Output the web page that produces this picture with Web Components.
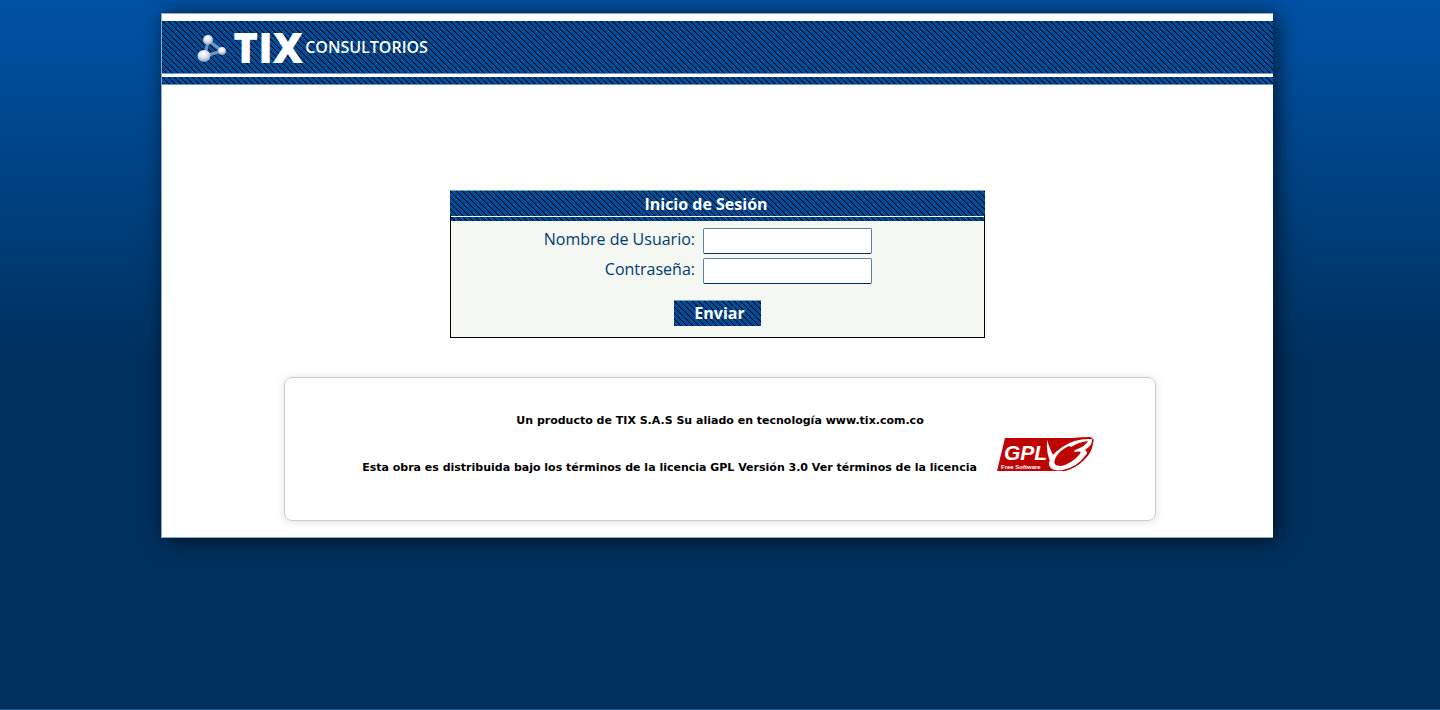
<!DOCTYPE html>
<html lang="es">
<head>
<meta charset="utf-8">
<title>TIX Consultorios</title>
<style>
html { min-height: 100%; background: #00305e; }
body {
  margin: 0; min-height: 100vh; box-sizing: border-box; border-bottom: 1px solid #1c57a5;
  background: #00305e linear-gradient(#0050a4 0, #004f9f 40px, #00305e 360px) no-repeat;
  font-family: "Open Sans", "Noto Sans", sans-serif;
  --stripes: url("data:image/svg+xml,%3Csvg xmlns='http://www.w3.org/2000/svg' width='6' height='6' shape-rendering='crispEdges'%3E%3Cpath fill='%23004e9e' d='M0 0h6v6H0z'/%3E%3Cpath fill='%23003c7a' d='M1 0h1v1H1zM2 1h1v1H2zM3 2h1v1H3zM4 3h1v1H4zM5 4h1v1H5zM0 5h1v1H0z'/%3E%3Cpath fill='%23000000' d='M0 0h1v1H0zM1 1h1v1H1zM2 2h1v1H2zM3 3h1v1H3zM4 4h1v1H4zM5 5h1v1H5z'/%3E%3C/svg%3E");
}
</style>
</head>
<body>
<tix-page>
  <tix-header slot="header"></tix-header>
  <tix-login></tix-login>
  <tix-footer></tix-footer>
</tix-page>
<script>
const define = (name, html) => {
  const template = document.createElement('template');
  template.innerHTML = html;
  customElements.define(name, class extends HTMLElement {
    constructor() {
      super();
      this.attachShadow({ mode: 'open' }).append(template.content.cloneNode(true));
    }
  });
};

define('tix-page', `
<style>
:host { display: block; padding: 13px 0 24px; }
.wrap { padding-right: 6px; }
.sheet {
  width: 77.5%; margin: 0 auto; box-sizing: border-box;
  background: #fff; border: 1px solid #8fa9c4; border-right: 0;
  box-shadow: 4px 2px 20px rgba(0,0,0,.65);
}
main { display: flex; flex-direction: column; align-items: center; gap: 39px; padding: 105px 0 16px; }
</style>
<div class="wrap"><div class="sheet">
  <slot name="header"></slot>
  <main><slot></slot></main>
</div></div>`);

define('tix-molecule', `
<style>:host { display: block; width: 30px; height: 30px; } svg { display: block; overflow: visible; }</style>
<svg width="30" height="30" viewBox="0 0 30 30" aria-hidden="true">
  <defs><radialGradient id="g" cx=".45" cy=".3" r=".7">
    <stop offset="0" stop-color="#fff"/><stop offset=".5" stop-color="#dce3ec"/><stop offset="1" stop-color="#8b9db8"/>
  </radialGradient></defs>
  <path d="M10 8 7 24 24 19Z" fill="none" stroke="#7395bf" stroke-width="3"/>
  <circle cx="10" cy="8" r="5" fill="url(#g)"/>
  <circle cx="24" cy="19" r="4" fill="url(#g)"/>
  <ellipse cx="6" cy="24" rx="6.500" ry="6" fill="url(#g)"/>
</svg>`);

define('tix-header', `
<style>
:host { display: block; padding-top: 7px; color: #fff; }
.bar { display: flex; align-items: center; height: 52px; padding-left: 36px; background: var(--stripes); border-bottom: 1px solid #7f9fc2; }
h1 { display: flex; align-items: center; gap: 2px; margin: 0; padding-left: 5px; font-weight: 400; line-height: 48px; }
.name { font-size: 42px; font-weight: 800; line-height: 48px; }
.sub { font-size: 16px; font-weight: 600; line-height: 48px; }
.rule { height: 7px; margin-top: 3px; background: var(--stripes); border-bottom: 1px solid #6f94bd; }
</style>
<div class="bar"><tix-molecule></tix-molecule><h1><span class="name">TIX</span><span class="sub">CONSULTORIOS</span></h1></div>
<div class="rule"></div>`);

define('tix-login', `
<style>
:host { display: block; width: 535px; max-width: 100%; }
form { margin: 0; box-sizing: border-box; border: 1px solid #000; border-top: 0; background: #f4f7f2; padding-bottom: 11px; }
h2 {
  margin: 0 -1px; height: 26px; box-sizing: border-box; padding-right: 23px; border-top: 1px solid #7e9dbf;
  background: var(--stripes); color: #fff; text-align: center; font-size: 16px; line-height: 26px; font-weight: 700;
}
.rule { height: 4px; background: var(--stripes); border-top: 1px solid #fff; }
.fields { display: grid; grid-template-columns: 244px 169px; column-gap: 8px; row-gap: 4px; padding-top: 7px; }
label { text-align: right; color: #003a74; font-size: 16px; line-height: 22px; }
input {
  box-sizing: border-box; width: 169px; height: 26px; padding: 2px 4px; background: #fff;
  border: 1px solid #5f7f9f; border-bottom-color: #00305e; border-radius: 2px; font: 14px "Open Sans", sans-serif;
}
button {
  display: block; margin: 16px auto 0; width: 87px; height: 26px; padding: 0 0 0 4px; border: 0; border-top: 1px solid #7e9dbf;
  background: var(--stripes); color: #fff; font: 700 16px/25px "Open Sans", sans-serif;
}
</style>
<form>
  <h2>Inicio de Sesión</h2>
  <div class="rule"></div>
  <div class="fields">
    <label for="user">Nombre de Usuario:</label><input id="user" type="text">
    <label for="pass">Contraseña:</label><input id="pass" type="password">
  </div>
  <button type="button">Enviar</button>
</form>`);

define('gpl-badge', `
<style>:host { display: block; width: 97px; height: 35px; } svg { display: block; }</style>
<svg width="97" height="35" viewBox="0 0 97 35" role="img" aria-label="GPL v3 Free Software">
  <path d="M8 1H75Q85 0 93 0 97 1 96 6 95 16 87 23 78 32 66 34H0Z" fill="#bf0404"/>
  <text x="7" y="23" font-family="Liberation Sans" font-style="italic" font-size="21" fill="#fff">GPL</text>
  <text x="4" y="32" font-family="Liberation Sans" font-weight="700" font-size="6" fill="#fff">Free Software</text>
  <path d="M50 3Q49 17 54 26L57 20Q53 13 50 3Z" fill="#fff"/>
  <path d="M95 2Q79 1 67 9 51 19 52 28 54 35 66 33 80 30 88 19 92 15 88 13 96 8 95 2ZM91 4Q89 9 78 13L77 15Q87 13 82 18 74 27 64 29 54 29 59 20 63 13 72 9L74 10Q82 5 91 4Z" fill="#fff" fill-rule="evenodd"/>
  <path d="M66 34Q80 31 89 20 93 15 90 13 97 7 96 2" fill="none" stroke="#bf0404"/>
</svg>`);

define('tix-footer', `
<style>
:host {
  display: block; box-sizing: border-box; width: 872px; max-width: 100%; padding: 36px 20px 45px; margin-left: 5px;
  border: 1px solid #ccc; border-radius: 8px; box-shadow: 0 1px 10px rgba(0,0,0,.12);
  color: #000; text-align: center; font: 700 11px/14px "DejaVu Sans", sans-serif;
}
p { margin: 0; }
.license { margin-top: 9px; display: flex; justify-content: center; align-items: flex-start; gap: 4px; }
.license span { width: 646px; padding-top: 24px; }
</style>
<p>Un producto de TIX S.A.S Su aliado en tecnología www.tix.com.co</p>
<p class="license"><span>Esta obra es distribuida bajo los términos de la licencia GPL Versión 3.0 Ver términos de la licencia</span><gpl-badge></gpl-badge></p>`);
</script>
</body>
</html>
